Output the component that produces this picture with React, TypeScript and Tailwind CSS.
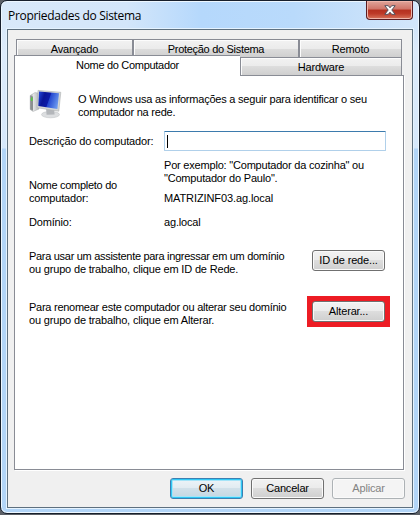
import type { ReactNode } from "react";

function Line({ children, className = "" }: { children: ReactNode; className?: string }) {
  return <div className={`h-[13px] whitespace-nowrap leading-[13px] ${className}`}>{children}</div>;
}

function Button({ children, variant = "normal" }: { children: ReactNode; variant?: "normal" | "primary" | "disabled" }) {
  const look = {
    normal: "border-[#707070] bg-[linear-gradient(#f2f2f2,#ebebeb_50%,#dddddd_50%,#cfcfcf)] shadow-[inset_0_0_0_1px_#fafafa]",
    primary: "border-[#3c7fb1] bg-[linear-gradient(#edf4f8,#e1ebf1_50%,#d1e0e9_50%,#c3d7e2)] shadow-[inset_0_0_0_1px_#2fc8f5,inset_0_0_0_2px_#a5e4f8]",
    disabled: "border-[#adb2b5] bg-[#f4f4f4] text-[#838383] shadow-[inset_0_0_0_1px_#fafafa]",
  }[variant];
  return (
    <button className={`flex h-[21px] w-[73px] shrink-0 items-center justify-center rounded-[3px] border whitespace-nowrap leading-[13px] ${look}`}>
      {children}
    </button>
  );
}

function Tab({ children, className = "" }: { children: ReactNode; className?: string }) {
  return (
    <div className={`flex h-[18px] items-center justify-center whitespace-nowrap border-t border-r border-l border-[#898c95] bg-[linear-gradient(#f2f2f2,#ebebeb_50%,#dddddd_50%,#cfcfcf)] pt-[2px] leading-[13px] shadow-[inset_1px_1px_0_#fcfcfc] ${className}`}>
      {children}
    </div>
  );
}

function ComputerIcon() {
  return (
    <svg width="33" height="30" viewBox="0 0 33 30">
      <defs>
        <linearGradient id="screen" x1="0" y1=".3" x2="1" y2=".6">
          <stop offset="0" stopColor="#1f3fd0" />
          <stop offset=".25" stopColor="#0a1596" />
          <stop offset=".5" stopColor="#0c1ba8" />
          <stop offset=".54" stopColor="#2448d0" />
          <stop offset="1" stopColor="#6f9cf0" />
        </linearGradient>
        <linearGradient id="tower" x1="0" y1="0" x2="1" y2="0">
          <stop offset="0" stopColor="#8d9194" />
          <stop offset=".35" stopColor="#e5e6e7" />
          <stop offset="1" stopColor="#b2b5b8" />
        </linearGradient>
      </defs>
      <path d="M1.2 6.5 6 3.5l4 .8V20l-6 2.5-2.8-2z" fill="url(#tower)" stroke="#a9acaf" strokeWidth=".5" />
      <path d="m1.4 6.8 2.6.8v14.2l-2.6-1.6z" fill="#8b8f90" />
      <path d="M2.7 8.5v3.5" stroke="#55cf3d" strokeWidth="1.5" />
      <ellipse cx="21.5" cy="25.6" rx="9" ry="3.2" fill="#dcdee0" stroke="#b9bcbf" strokeWidth=".5" />
      <path d="m17 19 8 1 .6 5.5-8 .3z" fill="#b3b6ba" />
      <path d="M9 1.4 31.8 3.3 29.8 22.2 8 18.7z" fill="#d5d7d6" stroke="#adb0b1" strokeWidth=".6" />
      <path d="M10 2.4 30 4.2 28.4 20 9.3 17z" fill="url(#screen)" />
    </svg>
  );
}

export default function App() {
  return (
    <div className="h-[515px] w-[420px] bg-[#5c6067] pb-px font-['Liberation_Sans',Arial,sans-serif] text-[11px] tracking-[-0.17px] text-black">
      <div className="flex h-[514px] flex-col rounded-[7px] border border-[#171f2c] bg-[linear-gradient(#dcebfb00_0,#dcebfb00_28px,#dcebfb_50px,#d6e8fb_147px,#b2d5f8_148px,#b2d5f8_100%),linear-gradient(90deg,#d9e9fa_0%,#d3e6fa_30%,#b5d8fc_48%,#b9dafb_70%,#d3e6fa_100%)] px-[6px] shadow-[inset_0_0_0_1px_#edf7ff]">
        <header className="flex h-[28px] shrink-0 items-start justify-between">
          <h1 className="pt-[6px] pl-px font-['Open_Sans',sans-serif] text-[12px] leading-[18px] font-normal tracking-[-0.3px]">Propriedades do Sistema</h1>
          <button aria-label="Fechar" className="flex h-[19px] w-[47px] items-center justify-center rounded-b-[4px] border border-t-0 border-[#5a1c22] bg-[linear-gradient(#dfa59b,#cf7468_45%,#b5301f_50%,#bd3a28_70%,#d8745c)] shadow-[inset_0_0_0_1px_#efb5aa]">
            <svg width="12" height="10" viewBox="0 0 12 10">
              <path d="M.8.7h3.5L6 2.8 7.7.7h3.5L7.8 5l3.4 4.3H7.7L6 7.2 4.3 9.3H.8L4.2 5z" fill="#fff" stroke="#51525e" />
            </svg>
          </button>
        </header>

        <main className="flex h-[479px] w-[406px] shrink-0 flex-col border border-[#5e707f] bg-[#f0f0f0] shadow-[0_0_0_1px_#e5f3ff]">
          <div className="mt-[9px] ml-[8px] flex h-[18px] shrink-0">
            <Tab className="w-[117px]">Avançado</Tab>
            <Tab className="w-[166px] tracking-[-0.3px]">Proteção do Sistema</Tab>
            <Tab className="w-[103px]">Remoto</Tab>
          </div>
          <div className="relative z-10 -mt-[2px] ml-[6px] flex h-[21px] shrink-0">
            <div className="flex w-[226px] justify-center whitespace-nowrap border-t border-l border-[#898c95] bg-white pt-[3px] leading-[13px] tracking-[-0.3px]">Nome do Computador</div>
            <Tab className="mt-[2px] w-[162px]">Hardware</Tab>
          </div>

          <section className="-mt-px ml-[6px] flex h-[395px] w-[390px] shrink-0 flex-col border border-[#898c95] bg-white pl-[14px] shadow-[1px_1px_0_#fff]">
            <div className="mt-[13px] flex h-[42px] shrink-0">
              <ComputerIcon />
              <div className="mt-[4px] ml-[16px]">
                <Line className="tracking-[-0.22px]">O Windows usa as informações a seguir para identificar o seu</Line>
                <Line className="tracking-[-0.22px]">computador na rede.</Line>
              </div>
            </div>
            <div className="flex h-[20px] shrink-0 items-center">
              <label htmlFor="desc" className="w-[135px] whitespace-nowrap">Descrição do computador:</label>
              <div id="desc" className="flex h-[20px] w-[222px] items-center rounded-[1px] border border-[#b0d0ea] border-t-[#3d7bad] bg-white pl-[2px]">
                <span className="h-[13px] w-px bg-black" />
              </div>
            </div>
            <div className="mt-[8px] ml-[135px]">
              <Line className="tracking-[-0.2px]">Por exemplo: "Computador da cozinha" ou</Line>
              <Line className="tracking-[-0.2px]">"Computador do Paulo".</Line>
            </div>
            <div className="-mt-[6px] flex items-end">
              <div className="w-[135px]">
                <Line className="tracking-[-0.28px]">Nome completo do</Line>
                <Line>computador:</Line>
              </div>
              <Line className="tracking-[-0.1px]">MATRIZINF03.ag.local</Line>
            </div>
            <div className="mt-[11px] flex">
              <Line className="w-[135px]">Domínio:</Line>
              <Line>ag.local</Line>
            </div>
            <div className="mt-[21px] flex">
              <div className="w-[283px]">
                <Line className="tracking-[-0.3px]">Para usar um assistente para ingressar em um domínio</Line>
                <Line>ou grupo de trabalho, clique em ID de Rede.</Line>
              </div>
              <Button>ID de rede...</Button>
            </div>
            <div className="mt-[20px] flex">
              <div className="mt-[5px] w-[278px]">
                <Line className="tracking-[-0.26px]">Para renomear este computador ou alterar seu domínio</Line>
                <Line>ou grupo de trabalho, clique em Alterar.</Line>
              </div>
              <div className="flex h-[31px] w-[83px] items-center justify-center bg-[#ed1c24]">
                <Button>Alterar...</Button>
              </div>
            </div>
          </section>
          <footer className="mt-[8px] mr-[7px] flex justify-end gap-[8px]">
            <Button variant="primary">OK</Button>
            <Button>Cancelar</Button>
            <Button variant="disabled">Aplicar</Button>
          </footer>
        </main>
      </div>
    </div>
  );
}
